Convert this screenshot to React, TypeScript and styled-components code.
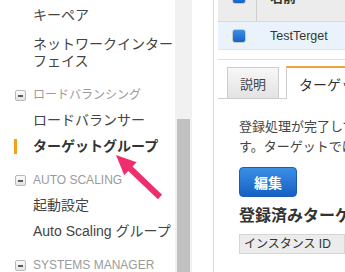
import React from "react";
import styled, { createGlobalStyle } from "styled-components";

const Global = createGlobalStyle`
  html, body { margin: 0; padding: 0; width: 345px; height: 272px; overflow: hidden; background: #fff; }
  body { font-family: "Liberation Sans", Arial, "Noto Sans CJK JP", sans-serif; }
`;

const Page = styled.div`
  position: relative;
  display: flex;
  width: 345px;
  height: 272px;
  overflow: hidden;
  background: #fff;
`;

const Sidebar = styled.nav`
  width: 175px;
  flex: none;
  display: flex;
  flex-direction: column;
  gap: 17.5px;
  padding-top: 6.5px;
  box-sizing: border-box;
`;

const Group = styled.div<{ $gap: number }>`
  display: flex;
  flex-direction: column;
  gap: ${(p) => p.$gap}px;
`;

const Item = styled.div<{ $active?: boolean }>`
  display: flex;
  align-items: center;
  padding-left: 14px;
  font-size: 14px;
  line-height: 17px;
  color: ${(p) => (p.$active ? "#333" : "#444")};
  font-weight: ${(p) => (p.$active ? 700 : 400)};
  white-space: nowrap;
`;

const Marker = styled.span<{ $active?: boolean }>`
  flex: none;
  width: 3px;
  height: 15px;
  margin-right: 16px;
  background: ${(p) => (p.$active ? "#f5a11c" : "transparent")};
`;

const Section = styled.div`
  display: flex;
  flex-direction: column;
  gap: 7.5px;
`;

const SectionHeader = styled.div`
  display: flex;
  align-items: center;
  gap: 7px;
  padding-left: 15px;
  font-size: 12px;
  line-height: 17px;
  color: #9b9b9b;
  white-space: nowrap;
`;

const CollapseIcon = styled.span`
  flex: none;
  width: 11px;
  height: 11px;
  box-sizing: border-box;
  border: 1px solid #b9b9b9;
  border-radius: 2px;
  background: linear-gradient(#fbfbfb, #e3e3e3);
  display: flex;
  align-items: center;
  justify-content: center;
  &::after {
    content: "";
    width: 5px;
    height: 2px;
    background: #5a5a5a;
  }
`;

const ItemList = styled.div`
  display: flex;
  flex-direction: column;
  gap: 9px;
`;

const ScrollTrack = styled.div`
  width: 17px;
  flex: none;
  background: #f1f1f1;
  display: flex;
  flex-direction: column;
  padding: 119px 2px 0;
  box-sizing: border-box;
`;

const ScrollThumb = styled.div`
  flex: 1;
  background: #c1c1c1;
`;

const Gutter = styled.div`
  width: 21px;
  flex: none;
  background: #fff;
`;

const Content = styled.main`
  flex: 1;
  min-width: 0;
  border-left: 1px solid #dcdcdc;
  overflow: hidden;
  padding-left: 4px;
`;

const Table = styled.div`
  margin-top: -28px;
  display: flex;
  flex-direction: column;
`;

const Row = styled.div<{ $header?: boolean }>`
  display: flex;
  align-items: stretch;
  box-sizing: border-box;
  height: ${(p) => (p.$header ? 50 : 28)}px;
  background: ${(p) => (p.$header ? "#ececec" : "#eaf3fc")};
  border-bottom: 1px solid ${(p) => (p.$header ? "#d8d8d8" : "#dde5ee")};
`;

const CheckCell = styled.div<{ $divider?: boolean }>`
  width: 39px;
  flex: none;
  box-sizing: border-box;
  padding-left: 14px;
  display: flex;
  align-items: center;
  border-right: 1px solid ${(p) => (p.$divider ? "#cfcfcf" : "transparent")};
`;

const Checkbox = styled.span`
  width: 14px;
  height: 14px;
  box-sizing: border-box;
  border: 1px solid #c9c9c9;
  border-radius: 3px;
  background: linear-gradient(#3c8fe3, #1662c7);
`;

const NameCell = styled.div<{ $header?: boolean }>`
  display: flex;
  align-items: center;
  padding-left: 13px;
  font-size: ${(p) => (p.$header ? 13 : 12.5)}px;
  font-weight: ${(p) => (p.$header ? 700 : 400)};
  color: #2f3a2f;
  white-space: nowrap;
`;

const Rule = styled.div`
  height: 1px;
  margin-top: 9px;
  background: #dedede;
`;

const TabBar = styled.div`
  margin-top: 7px;
  height: 32px;
  box-sizing: border-box;
  display: flex;
  align-items: flex-end;
  gap: 7px;
  padding-left: 9px;
  border-bottom: 1px solid #cdcdcd;
`;

const Tab = styled.div<{ $active?: boolean }>`
  box-sizing: border-box;
  display: flex;
  align-items: center;
  white-space: nowrap;
  border: 1px solid #cdcdcd;
  border-bottom: none;
  ${(p) =>
    p.$active
      ? `
    border-top: 2px solid #eea53a;
    background: #fff;
    margin-bottom: -1px;
    height: 33px;
    padding: 0 12px;
    font-size: 14px;
    color: #333;
    flex: 1 0 auto;
  `
      : `
    flex: none;
    height: 31px;
    width: 52px;
    justify-content: center;
    background: linear-gradient(#f7f7f7, #e3e3e3);
    font-size: 13px;
    color: #444;
  `}
`;

const TabBody = styled.div`
  padding: 18px 0 0 21px;
  display: flex;
  flex-direction: column;
  align-items: flex-start;
`;

const Paragraph = styled.p`
  margin: 0;
  font-size: 13px;
  line-height: 20px;
  color: #444;
  white-space: nowrap;
`;

const Line = styled.span`
  display: block;
`;

const EditButton = styled.button`
  margin-top: 10px;
  width: 58px;
  height: 30px;
  box-sizing: border-box;
  border: 1px solid #1b5bb0;
  border-radius: 4px;
  background: linear-gradient(#3b8fe6, #1560c3);
  color: #fff;
  font-family: inherit;
  font-size: 14px;
  font-weight: 700;
  padding: 0;
`;

const Heading = styled.h3`
  margin: 9px 0 0;
  font-size: 16px;
  line-height: 20px;
  font-weight: 700;
  color: #333;
  white-space: nowrap;
`;

const ColumnHead = styled.div`
  margin-top: 8px;
  align-self: stretch;
  height: 20px;
  box-sizing: border-box;
  border: 1px solid #d6d6d6;
  background: #ececec;
  padding-left: 4px;
  font-size: 12px;
  line-height: 18px;
  color: #333;
  white-space: nowrap;
`;

const Overlay = styled.svg`
  position: absolute;
  left: 0;
  top: 0;
  pointer-events: none;
`;

export default function App() {
  return (
    <>
      <Global />
      <Page>
        <Sidebar>
          <Group $gap={12}>
            <Item>
              <Marker />
              キーペア
            </Item>
            <Item>
              <Marker />
              <span>
                ネットワークインター
                <br />
                フェイス
              </span>
            </Item>
          </Group>
          <Section>
            <SectionHeader>
              <CollapseIcon />
              ロードバランシング
            </SectionHeader>
            <ItemList>
              <Item>
                <Marker />
                ロードバランサー
              </Item>
              <Item $active>
                <Marker $active />
                ターゲットグループ
              </Item>
            </ItemList>
          </Section>
          <Section>
            <SectionHeader>
              <CollapseIcon />
              AUTO SCALING
            </SectionHeader>
            <ItemList>
              <Item>
                <Marker />
                起動設定
              </Item>
              <Item>
                <Marker />
                Auto Scaling グループ
              </Item>
            </ItemList>
          </Section>
          <Section>
            <SectionHeader>
              <CollapseIcon />
              SYSTEMS MANAGER
            </SectionHeader>
          </Section>
        </Sidebar>
        <ScrollTrack>
          <ScrollThumb />
        </ScrollTrack>
        <Gutter />
        <Content>
          <Table>
            <Row $header>
              <CheckCell $divider>
                <Checkbox />
              </CheckCell>
              <NameCell $header>名前</NameCell>
            </Row>
            <Row>
              <CheckCell>
                <Checkbox />
              </CheckCell>
              <NameCell>TestTerget</NameCell>
            </Row>
          </Table>
          <Rule />
          <TabBar>
            <Tab>説明</Tab>
            <Tab $active>ターゲット</Tab>
          </TabBar>
          <TabBody>
            <Paragraph>
              <Line>登録処理が完了していないターゲットがありま</Line>
              <Line>す。ターゲットではヘルスチェックが実行されます。</Line>
            </Paragraph>
            <EditButton>編集</EditButton>
            <Heading>登録済みターゲット</Heading>
            <ColumnHead>インスタンス ID</ColumnHead>
          </TabBody>
        </Content>
        <Overlay width="345" height="272" viewBox="0 0 345 272">
          <polygon
            points="116,155 136.6,162.3 132.5,166.6 162.1,194.8 157.9,199.2 128.3,171 124.2,175.3"
            fill="#ef2f6d"
          />
        </Overlay>
      </Page>
    </>
  );
}
